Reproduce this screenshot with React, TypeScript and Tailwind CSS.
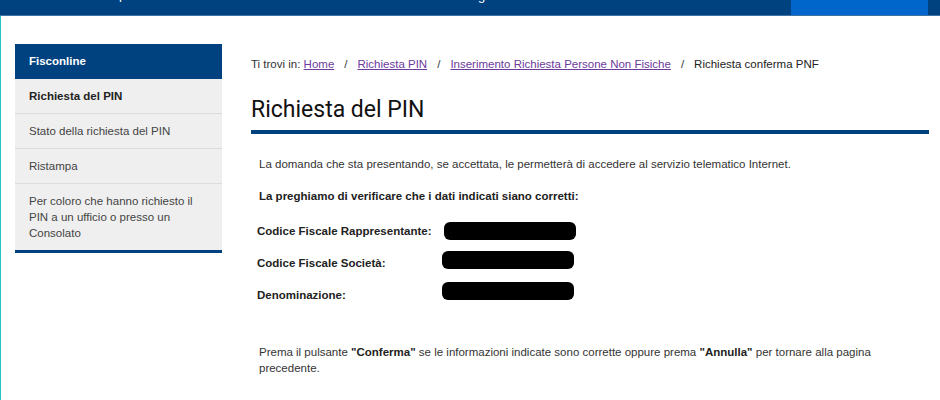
const sideItems = [
  { label: "Richiesta del PIN", active: true },
  { label: "Stato della richiesta del PIN" },
  { label: "Ristampa" },
  { label: "Per coloro che hanno richiesto il PIN a un ufficio o presso un Consolato" },
];

const crumbs = ["Home", "Richiesta PIN", "Inserimento Richiesta Persone Non Fisiche"];

const fields = [
  { label: "Codice Fiscale Rappresentante:", box: "ml-[2px]" },
  { label: "Codice Fiscale Società:", box: "mb-[6px]" },
  { label: "Denominazione:", box: "mb-[8px]" },
];

function Redacted({ className }: { className?: string }) {
  return <span className={`block h-[18px] w-[132px] rounded-[6px] bg-black ${className ?? ""}`} />;
}

export default function App() {
  return (
    <div className="h-[400px] w-[940px] overflow-hidden bg-white font-['Liberation_Sans',Arial,sans-serif] text-[11.5px] leading-[16px] text-[#333]">
      <header className="flex h-[16px] border-b border-[#3f72a6] bg-[#00427f]">
        <div className="relative w-[791px] overflow-hidden">
          <span className="absolute left-[119px] top-[-13px] text-[13px] text-white">p</span>
          <span className="absolute left-[478px] top-[-12px] text-[13px] text-white">g</span>
        </div>
        <div className="w-[137px] bg-[#0066cc]" />
      </header>

      <div className="flex h-[384px] border-l border-[#22c4c8] pl-[14px] pt-[28px]">
        <nav className="w-[207px] shrink-0 self-start border-b-[3px] border-[#00427f] bg-[#efefef]">
          <div className="bg-[#00427f] px-[14px] py-[9px] pb-[10px] font-bold text-white">Fisconline</div>
          {sideItems.map((item, i) => (
            <div
              key={item.label}
              className={`px-[14px] py-[9px] ${i > 0 ? "border-t border-[#dcdcdc]" : ""} ${
                item.active ? "font-bold text-[#222]" : "text-[#444]"
              }`}
            >
              {item.label}
            </div>
          ))}
        </nav>

        <main className="ml-[29px] w-[678px] pt-[12px]">
          <div className="flex items-center">
            <span>Ti trovi in:&nbsp;</span>
            {crumbs.map((c) => (
              <span key={c} className="flex">
                <a href="#" className="text-[#6b3a9c] underline">
                  {c}
                </a>
                <span className="mx-[10px]">/</span>
              </span>
            ))}
            <span className="text-[#222]">Richiesta conferma PNF</span>
          </div>

          <h1 className="mt-[24px] font-['Roboto',sans-serif] text-[23px] leading-[27px] text-[#111]">Richiesta del PIN</h1>
          <div className="mt-[7px] h-[4px] bg-[#00427f]" />

          <div className="pl-[8px]">
            <p className="mt-[22px]">
              La domanda che sta presentando, se accettata, le permetterà di accedere al servizio telematico Internet.
            </p>
            <p className="mt-[16px] font-bold text-[#222]">La preghiamo di verificare che i dati indicati siano corretti:</p>

            <div className="mt-[11px] -ml-[2px]">
              {fields.map((f) => (
                <div key={f.label} className="flex h-[32px] items-center">
                  <span className="w-[185px] font-bold text-[#222]">{f.label}</span>
                  <Redacted className={f.box} />
                </div>
              ))}
            </div>

            <p className="mt-[33px] w-[650px]">
              Prema il pulsante <b className="text-[#222]">"Conferma"</b> se le informazioni indicate sono corrette oppure
              prema <b className="text-[#222]">"Annulla"</b> per tornare alla pagina precedente.
            </p>
          </div>
        </main>
      </div>
    </div>
  );
}
